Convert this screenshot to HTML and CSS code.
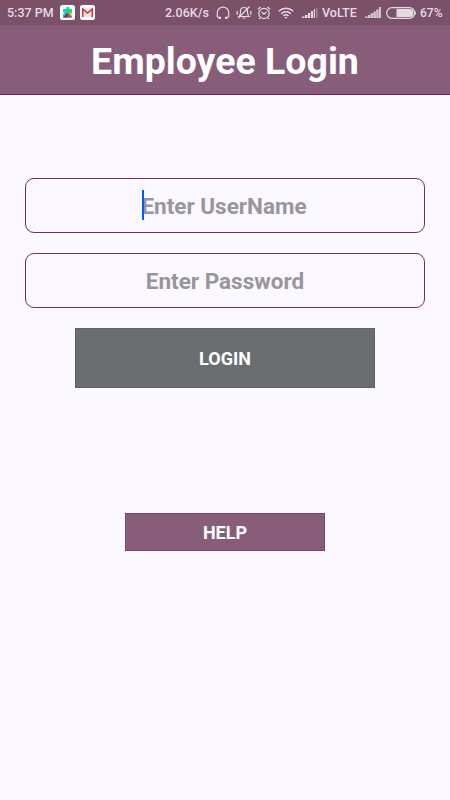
FILE: index.html
```html
<!DOCTYPE html>
<html lang="en">
<head>
<meta charset="utf-8">
<title>Employee Login</title>
<link rel="stylesheet" href="styles.css">
</head>
<body>
<div class="status">
  <span class="time">5:37 PM</span>
  <svg class="app" width="15" height="15" viewBox="0 0 15 15"><rect width="15" height="15" rx="2.500" fill="#fff"/><path d="M3 4h9v3.500l-1.500.5 1.500 1v3.500H3V9l1.500-1L3 7z" fill="#17cfd8"/><path d="M6.500 2h2.300v3H12v2.500L8 8 6 6z" fill="#13df78"/><path d="M7.500 7.500 3 12.500h4.500z" fill="#43318c"/><path d="M7.500 7.500 12 12.500H6z" fill="#f12a25"/><path d="m8.500 7.800 3.500 4V9l-1.500-1z" fill="#ffc928"/></svg>
  <svg class="mail" width="15" height="15" viewBox="0 0 15 15"><rect width="15" height="15" rx="2.500" fill="#fff"/><path d="M2 3h11v9H2z" fill="#e5e5e5"/><path d="M2.700 12V4l4.800 4 4.800-4V12" fill="none" stroke="#d62e2a" stroke-width="1.500"/></svg>
  <span class="speed">2.06K/s</span>
  <svg class="headset" width="14" height="14" viewBox="0 0 14 14"><path d="M4.500 12H2.800L1.300 10.500V6.500a5.700 5.300 0 0 1 11.400 0V10.500L11.200 12H9.500" class="line"/><path d="M2.800 10.700h2.200v2.300H2.800zm6.200 0h2.200v2.300H9z" fill="#e5dae1"/></svg>
  <svg class="bell" width="16" height="15" viewBox="0 0 16 15"><path d="M3 11.500q1.500-1 1.500-5.500a3.500 3.500 0 0 1 7 0q0 4.500 1.500 5.500zM6.500 13h3M13.500 1.500 2.500 13" class="line"/><path d="M.5 6H2v4H.5zM14 6h1.500v4H14z" fill="#cbb9c5"/></svg>
  <svg class="alarm" width="14" height="14" viewBox="0 0 14 14"><circle cx="7" cy="7.500" r="5.200" class="line"/><path d="M1 3.300 3.500 1M13 3.300 10.500 1M4.500 6 7 8.300 9.500 6M3 12l-1 1m9-1 1 1" class="line"/></svg>
  <svg class="wifi" width="16" height="12" viewBox="0 0 16 12"><path d="M.8 4.200a10.500 10.500 0 0 1 14.400 0M3.200 6.700a7 7 0 0 1 9.600 0M5.500 9a3.600 3.600 0 0 1 5 0" class="line wide"/><path d="M6.500 10h3L8 11.700z" fill="#e5dae1"/></svg>
  <svg class="signal-a" width="16" height="10" viewBox="0 0 16 10"><path d="M0 8.500h2.500V10H0zM3 7h2.500v3H3zM6 5h2.200v5H6zM9 3h2v7H9zM11.800 1H13v9h-1.200z" fill="#e5dae1"/><path d="M14 0h1.500v10H14z" fill="#a58598"/></svg>
  <span class="volte">VoLTE</span>
  <svg class="signal-b" width="16" height="11" viewBox="0 0 16 11"><path d="M0 9.500h2.500V11H0zM2.800 8h2.500v3H2.800zM5.600 6.300h2.500V11H5.600zM8.400 4.500h2.500V11H8.400zM11.200 2.500h2.500V11h-2.500zM14 0h2v11h-2z" fill="#d3c4ce"/></svg>
  <svg class="battery" width="31" height="12" viewBox="0 0 31 12"><rect x=".7" y=".7" width="28" height="10.600" rx="5.300" class="line"/><path d="M10.500 2h13a4 4 0 0 1 0 8h-13z" fill="#e5dae1"/><path d="M29 4q2 2 0 4z" fill="#e5dae1"/></svg>
  <span class="percent">67%</span>
</div>
<header class="header"><h1>Employee Login</h1></header>
<main class="form">
  <div class="field"><span class="hint user"><i class="caret"></i>Enter UserName</span></div>
  <div class="field"><span class="hint">Enter Password</span></div>
  <button class="login">LOGIN</button>
  <button class="help">HELP</button>
</main>
</body>
</html>
```
FILE: styles.css
```css
* { box-sizing: border-box; }
body {
  margin: 0;
  height: 800px;
  background: #fcf8ff;
  font-family: Roboto, sans-serif;
  overflow: hidden;
}
.status {
  display: flex;
  align-items: center;
  height: 25px;
  padding-left: 7px;
  background: #7b5069;
  color: #e5dae1;
  font-size: 12.5px;
  font-weight: 500;
  line-height: 25px;
  white-space: nowrap;
}
.status > * { flex: none; }
.line { fill: none; stroke: #e5dae1; stroke-width: 1.2; }
.wide { stroke-width: 1.5; }
.time { width: 53px; }
.mail { margin-left: 5px; }
.speed { width: 46px; margin-left: 70px; }
.headset { margin-left: 5px; }
.bell { margin-left: 6px; }
.alarm { margin-left: 5px; }
.wifi { margin-left: 7px; }
.signal-a { margin-left: 8px; }
.volte { width: 37px; margin-left: 4px; }
.signal-b { margin-left: 6px; }
.battery { margin-left: 5px; }
.percent { margin-left: 3px; padding-top: 1px; font-size: 12px; }
.header {
  height: 70px;
  background: #885d79;
  border-bottom: 1px solid #6d1f5b;
  text-align: center;
}
h1 {
  margin: 0;
  color: #fff;
  font-size: 37.5px;
  font-weight: 700;
  line-height: 73px;
}
.form {
  display: flex;
  flex-direction: column;
  align-items: center;
  padding-top: 83px;
}
.field {
  display: flex;
  align-items: center;
  justify-content: center;
  width: 400px;
  height: 55px;
  margin-bottom: 20px;
  border: 1px solid #752d60;
  border-radius: 9px;
}
.hint {
  position: relative;
  color: #98969b;
  font-size: 22.5px;
  font-weight: 700;
}
.user { left: -1px; }
.caret {
  position: absolute;
  left: 1px;
  top: -3px;
  width: 2px;
  height: 30px;
  background: #005cff;
}
button {
  padding: 0;
  border: 0;
  border-radius: 0;
  color: #fff;
  font-family: inherit;
  font-size: 18px;
  font-weight: 700;
}
.login {
  width: 300px;
  height: 60px;
  background: #6a6e6f;
  border: 1px solid #5d6263;
}
.help {
  width: 200px;
  height: 38px;
  margin-top: 125px;
  background: #885d79;
  border: 1px solid #7c456c;
}
```
